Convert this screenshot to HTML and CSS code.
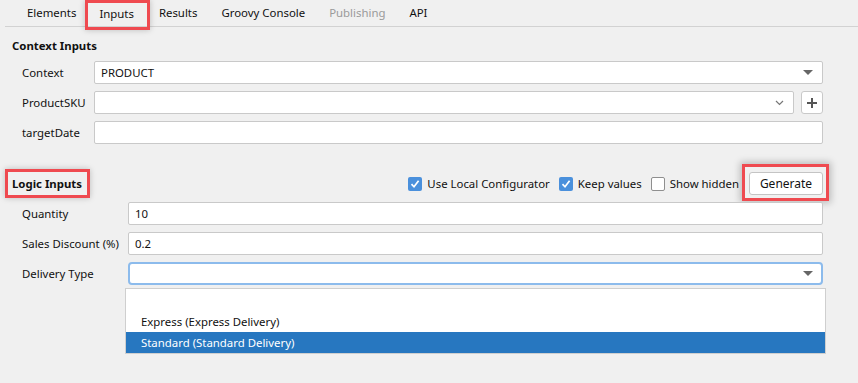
FILE: index.html
```html
<!DOCTYPE html>
<html lang="en">
<head>
    <meta charset="UTF-8">
    <meta name="viewport" content="width=device-width, initial-scale=1.0">
    <title>Inputs</title>
    <link rel="stylesheet" href="styles.css">
</head>
<body>
    <nav class="tabs">
        <a class="tab" href="#">Elements</a>
        <a class="tab tab-marked" href="#">Inputs</a>
        <a class="tab" href="#">Results</a>
        <a class="tab" href="#">Groovy Console</a>
        <a class="tab tab-disabled" href="#">Publishing</a>
        <a class="tab" href="#">API</a>
    </nav>

    <section class="context">
        <h2 class="section-title">Context Inputs</h2>
        <div class="form-grid context-grid">
            <label>Context</label>
            <div class="field select">
                <span>PRODUCT</span>
                <span class="caret"></span>
            </div>

            <label>ProductSKU</label>
            <div class="field-with-btn">
                <div class="field select">
                    <span></span>
                    <svg class="chevron" width="9" height="6" viewBox="0 0 9 6">
                        <path d="M1 1 L4.5 4.5 L8 1" fill="none" stroke="#777" stroke-width="1.2"/>
                    </svg>
                </div>
                <button class="plus-btn">
                    <svg width="12" height="12" viewBox="0 0 12 12">
                        <path d="M6 1 V11 M1 6 H11" stroke="#555" stroke-width="2"/>
                    </svg>
                </button>
            </div>

            <label>targetDate</label>
            <div class="field"></div>
        </div>
    </section>

    <section class="logic">
        <div class="logic-header">
            <h2 class="section-title title-marked">Logic Inputs</h2>
            <div class="options">
                <label class="check"><span class="box checked"></span>Use Local Configurator</label>
                <label class="check"><span class="box checked"></span>Keep values</label>
                <label class="check"><span class="box"></span>Show hidden</label>
                <span class="btn-marked">
                    <button class="generate">Generate</button>
                </span>
            </div>
        </div>
        <div class="form-grid logic-grid">
            <label>Quantity</label>
            <div class="field">10</div>

            <label>Sales Discount (%)</label>
            <div class="field">0.2</div>

            <label>Delivery Type</label>
            <div class="dropdown">
                <div class="field select focused">
                    <span></span>
                    <span class="caret"></span>
                </div>
                <ul class="popup">
                    <li></li>
                    <li>Express (Express Delivery)</li>
                    <li class="selected">Standard (Standard Delivery)</li>
                </ul>
            </div>
        </div>
    </section>
</body>
</html>
```

FILE: styles.css
```css
body {
    margin: 0;
    padding: 0;
    font-family: "Noto Sans", "Open Sans", sans-serif;
    font-size: 11.4px;
    color: #111;
    background: #f0f0f0;
    height: 383px;
    overflow: hidden;
}

/* tab strip */
.tabs {
    display: flex;
    height: 26px;
    margin-left: 5px;
    padding-left: 10px;
    border-bottom: 1px solid #d2d2d2;
}

.tab {
    padding: 0 12px;
    line-height: 26px;
    color: #111;
    text-decoration: none;
}

.tab-marked {
    margin: 3px 0 -1px;
    padding: 0 13px 0 11px;
    line-height: 21px;
    outline: 3px solid #ef4a50;
    box-shadow: 0 0 6px 3px rgba(0, 0, 0, 0.22);
}

.tab-disabled {
    color: #9a9a9a;
}

/* sections */
.section-title {
    margin: 0;
    font-size: 11.4px;
    font-weight: bold;
    line-height: 16px;
}

.context {
    padding: 11px 35px 0 12px;
}

.form-grid {
    display: grid;
    row-gap: 7px;
    align-items: center;
    margin-top: 7px;
    padding-left: 10px;
}

.context-grid {
    grid-template-columns: 72px 1fr;
}

.logic-grid {
    grid-template-columns: 106px 1fr;
}

.field {
    box-sizing: border-box;
    height: 23px;
    padding: 0 6px;
    line-height: 21px;
    background: white;
    border: 1px solid #c9c9c9;
    border-radius: 2px;
}

.select {
    display: flex;
    justify-content: space-between;
    align-items: center;
}

.caret {
    width: 0;
    height: 0;
    margin-right: 3px;
    border-left: 5px solid transparent;
    border-right: 5px solid transparent;
    border-top: 5px solid #666;
}

.chevron {
    margin-right: 3px;
}

.field-with-btn {
    display: flex;
    gap: 7px;
}

.field-with-btn .field {
    flex: 1;
}

.plus-btn {
    width: 22px;
    height: 23px;
    padding: 0;
    display: flex;
    align-items: center;
    justify-content: center;
    background: white;
    border: 1px solid #c9c9c9;
    border-radius: 3px;
}

/* logic inputs */
.logic {
    padding: 28px 35px 0 12px;
}

.logic-header {
    display: flex;
    justify-content: space-between;
    align-items: center;
    height: 23px;
}

.title-marked {
    margin-left: -4px;
    padding: 4px 5px 3px 4px;
    outline: 3px solid #ef4a50;
    box-shadow: 0 0 6px 3px rgba(0, 0, 0, 0.22);
}

.options {
    display: flex;
    align-items: center;
}

.check {
    display: flex;
    align-items: center;
    gap: 5px;
    margin-right: 9px;
}

.box {
    box-sizing: border-box;
    width: 14px;
    height: 14px;
    background: white;
    border: 1px solid #8f8f8f;
    border-radius: 2px;
}

.box.checked {
    border: none;
    background: #4a90dc url("data:image/svg+xml;utf8,<svg xmlns='http://www.w3.org/2000/svg' width='14' height='14'><path d='M3.5 7.2 L6 9.8 L10.6 3.8' fill='none' stroke='white' stroke-width='1.7'/></svg>") center no-repeat;
}

.btn-marked {
    display: flex;
    margin: -8px -6px -6px -6px;
    padding: 5px 3px 3px 4px;
    border: 3px solid #ef4a50;
    box-shadow: 0 0 7px 2px rgba(0, 0, 0, 0.22);
}

.generate {
    width: 74px;
    height: 23px;
    font-family: inherit;
    font-size: 12px;
    color: #111;
    background: white;
    border: 1px solid #c4c4c4;
    border-radius: 3px;
}

.dropdown {
    position: relative;
}

.focused {
    border: 2px solid #8cbbec;
    border-radius: 4px;
    padding: 0 5px;
}

.popup {
    position: absolute;
    top: 26px;
    left: -3px;
    right: -3px;
    margin: 0;
    padding: 0;
    list-style: none;
    background: white;
    border: 1px solid #cfcfcf;
}

.popup li {
    height: 21px;
    padding-left: 15px;
    line-height: 21px;
}

.popup li:first-child {
    height: 22px;
}

.popup .selected {
    color: white;
    background: #2777c0;
}
```
